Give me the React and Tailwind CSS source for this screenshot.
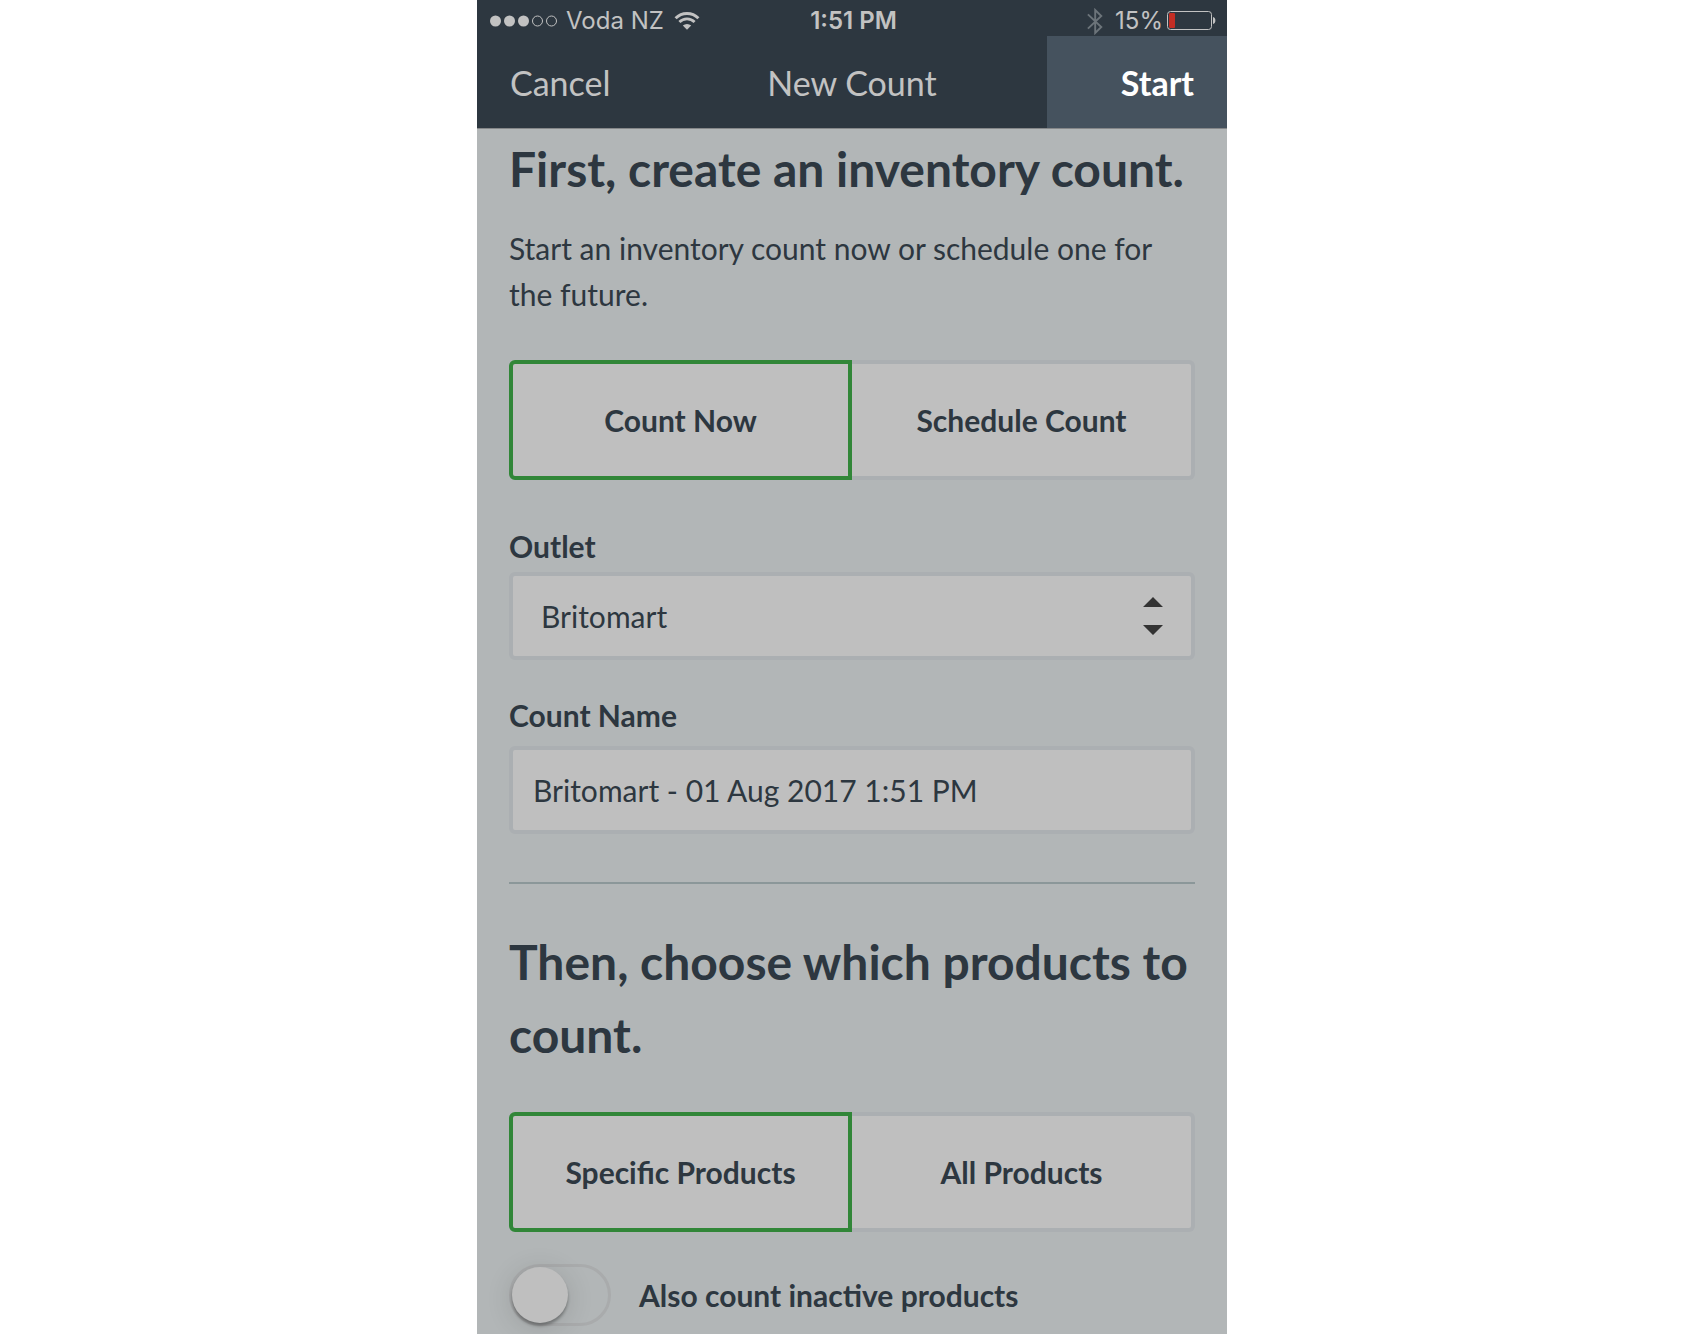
import { useState } from "react";

function SignalDots() {
  return (
    <svg width="68" height="12" viewBox="0 0 68 12" aria-label="Signal: 3 of 5" role="img">
      <circle cx="5.5" cy="6" r="5.5" fill="#c2c2c2" />
      <circle cx="19.5" cy="6" r="5.5" fill="#c2c2c2" />
      <circle cx="33.5" cy="6" r="5.5" fill="#c2c2c2" />
      <circle cx="47.5" cy="6" r="5" fill="none" stroke="#c2c2c2" strokeWidth="1" />
      <circle cx="61.5" cy="6" r="5" fill="none" stroke="#c2c2c2" strokeWidth="1" />
    </svg>
  );
}

function WifiIcon() {
  return (
    <svg width="26" height="18" viewBox="0 0 26 18" aria-label="Wi-Fi" role="img">
      <path d="M1.6 6.3A16.2 16.2 0 0 1 24.4 6.3" fill="none" stroke="#c2c2c2" strokeWidth="3" />
      <path d="M5.4 10.1A10.8 10.8 0 0 1 20.6 10.1" fill="none" stroke="#c2c2c2" strokeWidth="2.8" />
      <path d="M8.8 13.6a6 6 0 0 1 8.4 0L13 17.8z" fill="#c2c2c2" />
    </svg>
  );
}

function BluetoothIcon() {
  return (
    <svg width="16" height="27" viewBox="0 0 16 27" aria-label="Bluetooth" role="img">
      <path
        d="M0.9 6.4L14.3 19L8.2 25V2L14.3 8L0.9 20.6"
        fill="none"
        stroke="#6c747a"
        strokeWidth="1.9"
      />
    </svg>
  );
}

function BatteryIcon() {
  return (
    <svg width="50" height="20" viewBox="0 0 50 20" aria-label="Battery" role="img">
      <rect x="0.5" y="0.5" width="44" height="18" rx="3" fill="none" stroke="#c2c2c2" strokeWidth="1" />
      <rect x="2" y="2" width="6" height="15" rx="1" fill="#c22d24" />
      <path d="M46 6c3.2 0.6 3.2 6.6 0 7z" fill="#c2c2c2" />
    </svg>
  );
}

function StatusBar() {
  return (
    <div className="grid h-9 grid-cols-3 items-center pt-1.5 pr-2.5 pl-[13px] font-['Inter',sans-serif] text-2xl/7 text-[#c2c2c2]">
      <div className="flex items-center gap-2">
        <SignalDots />
        <span>Voda NZ</span>
        <span className="ml-0.5">
          <WifiIcon />
        </span>
      </div>
      <div className="text-center font-semibold">1:51 PM</div>
      <div className="flex items-center justify-end">
        <BluetoothIcon />
        <span className="ml-3">15%</span>
        <span className="ml-1">
          <BatteryIcon />
        </span>
      </div>
    </div>
  );
}

function NavBar() {
  return (
    <nav className="grid h-[92px] grid-cols-[180px_1fr_180px] text-[34px]/[48px] text-[#c2c2c2]">
      <button type="button" className="pt-0.5 pl-[33px] text-left">
        Cancel
      </button>
      <div className="self-center pt-0.5 text-center">New Count</div>
      <button type="button" className="bg-[#45525e] pt-0.5 pr-[33px] text-right font-bold text-white">
        Start
      </button>
    </nav>
  );
}

function Segmented({ label, options }) {
  const [selected, setSelected] = useState(options[0]);
  return (
    <div role="group" aria-label={label} className="grid grid-cols-2">
      {options.map((option, i) => (
        <button
          key={option}
          type="button"
          aria-pressed={option === selected}
          onClick={() => setSelected(option)}
          className={[
            "h-[120px] border-4 bg-[#bfbfbf] text-[30px]/[46px] font-bold",
            i === 0 ? "rounded-l-md" : "rounded-r-md",
            option === selected ? "border-[#318638]" : "border-[#abafb2]",
            option !== selected && i > 0 ? "border-l-0" : "",
            option !== selected && i === 0 ? "border-r-0" : "",
          ].join(" ")}
        >
          {option}
        </button>
      ))}
    </div>
  );
}

export default function App() {
  const [outlet, setOutlet] = useState("Britomart");
  const [name, setName] = useState("Britomart - 01 Aug 2017 1:51 PM");
  const [inactive, setInactive] = useState(false);

  return (
    <div className="min-h-screen bg-white pr-px font-['Lato',sans-serif]">
      <div className="mx-auto flex min-h-screen w-full max-w-[750px] flex-col bg-[#b2b6b7] text-[#2d3740]">
        <header className="border-b border-[#858789] bg-[#2d3740]">
          <StatusBar />
          <NavBar />
        </header>

        <main className="px-8 pt-[3px] pb-2 text-[30px]/[46px]">
          <h1 className="text-5xl/[73px] font-bold">First, create an inventory count.</h1>
          <p className="mt-5 mb-[43px]">Start an inventory count now or schedule one for the future.</p>

          <Segmented label="When to count" options={["Count Now", "Schedule Count"]} />

          <label htmlFor="outlet" className="mt-[43px] block font-bold">
            Outlet
          </label>
          <div className="relative mt-[3px]">
            <select
              id="outlet"
              value={outlet}
              onChange={(e) => setOutlet(e.target.value)}
              className="block h-[88px] w-full appearance-none rounded-md border-4 border-[#abafb2] bg-[#bfbfbf] pr-16 pl-7"
            >
              <option>Britomart</option>
            </select>
            <svg
              width="20"
              height="38"
              viewBox="0 0 20 38"
              aria-hidden="true"
              className="pointer-events-none absolute inset-y-0 right-8 my-auto"
            >
              <path d="M0 10L10 0L20 10zM0 28h20L10 38z" fill="#333333" />
            </svg>
          </div>

          <label htmlFor="count-name" className="mt-8 block font-bold">
            Count Name
          </label>
          <input
            id="count-name"
            type="text"
            value={name}
            onChange={(e) => setName(e.target.value)}
            className="mt-2 block h-[88px] w-full rounded-md border-4 border-[#abafb2] bg-[#bfbfbf] px-5"
          />

          <hr className="mt-12 border-t-2 border-[#8b9799]" />

          <h2 className="my-[41px] text-5xl/[73px] font-bold">Then, choose which products to count.</h2>

          <Segmented label="Products to count" options={["Specific Products", "All Products"]} />

          <label className="mt-8 flex items-center gap-7 font-bold">
            <input
              type="checkbox"
              role="switch"
              checked={inactive}
              onChange={(e) => setInactive(e.target.checked)}
              className="h-[62px] w-[102px] shrink-0 appearance-none rounded-full border-3 border-[#a9abac] before:block before:size-14 before:rounded-full before:bg-[#bfbfbf] before:shadow-[0_3px_3px_rgba(0,0,0,0.3),0_4px_28px_rgba(0,0,0,0.14)] checked:bg-[#318638] checked:before:translate-x-10"
            />
            Also count inactive products
          </label>
        </main>
      </div>
    </div>
  );
}
